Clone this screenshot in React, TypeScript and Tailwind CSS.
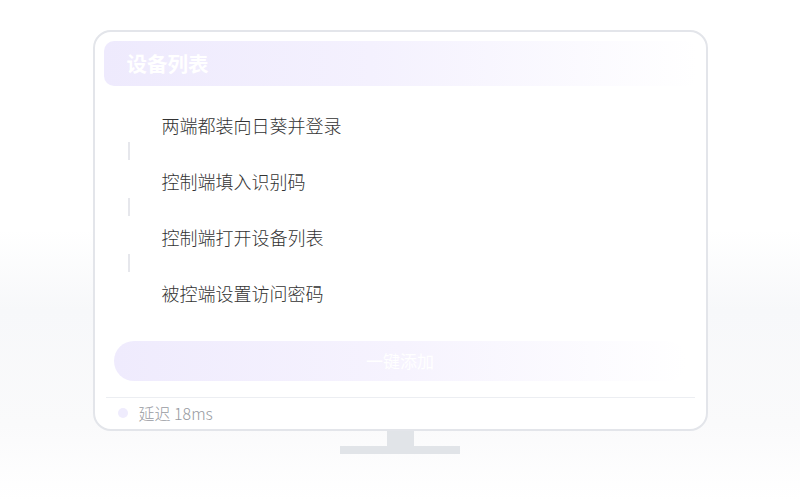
const STEPS = ['两端都装向日葵并登录', '控制端填入识别码', '控制端打开设备列表', '被控端设置访问密码']

export default function App() {
  return (
    <div
      className="w-[800px] h-[500px] flex flex-col items-center pt-[30px] bg-[linear-gradient(to_bottom,#ffffff_0%,#ffffff_46%,#f7f8fa_62%,#fafafb_85%,#ffffff_100%)]"
      style={{ fontFamily: '"Noto Sans CJK SC", "Noto Sans", sans-serif' }}
    >
      {/* ── monitor ── */}
      <div className="w-[615px] h-[401px] rounded-[18px] border-2 border-[#e3e5ea] bg-white flex flex-col px-[9px] pt-[9px]">
        <div className="h-[46px] rounded-[10px] flex items-center pl-[23px] bg-[linear-gradient(to_right,#eeeafd_0%,#f4f1fe_45%,#ffffff_100%)]">
          <span className="text-[20.5px] font-bold text-white leading-none">设备列表</span>
        </div>

        <div className="flex flex-col mt-[27px]">
          {STEPS.map((s, i) => (
            <div key={s}>
              <div className="h-[24px] flex items-center">
                <div className="w-[58px]" />
                <span className="text-[18px] font-light leading-none text-[#333]">{s}</span>
              </div>
              {i < STEPS.length - 1 && (
                <div className="h-[32px] pl-[24px] pt-[5px]">
                  <div className="w-[2px] h-[18px] bg-[#e6e7ec]" />
                </div>
              )}
            </div>
          ))}
        </div>

        <button className="mt-[36px] mx-[10px] h-[40px] rounded-full flex items-center justify-center bg-[linear-gradient(to_right,#efebfd_0%,#f6f3fe_50%,#ffffff_100%)]">
          <span className="text-[17px] text-white">一键添加</span>
        </button>

        <div className="mt-[16px] mx-[2px] h-px bg-[#eceef2]" />

        <div className="h-[32px] flex items-center px-[14px] gap-[11px]">
          <span className="w-[10px] h-[10px] rounded-full bg-[#efecfd]" />
          <span className="text-[16px] font-light text-[#979aa1]">延迟 18ms</span>
        </div>
      </div>

      {/* ── stand ── */}
      <div className="w-[27px] h-[15px] bg-[#e1e4e8]" />
      <div className="w-[120px] h-[8px] bg-[#e1e4e8]" />
    </div>
  )
}
